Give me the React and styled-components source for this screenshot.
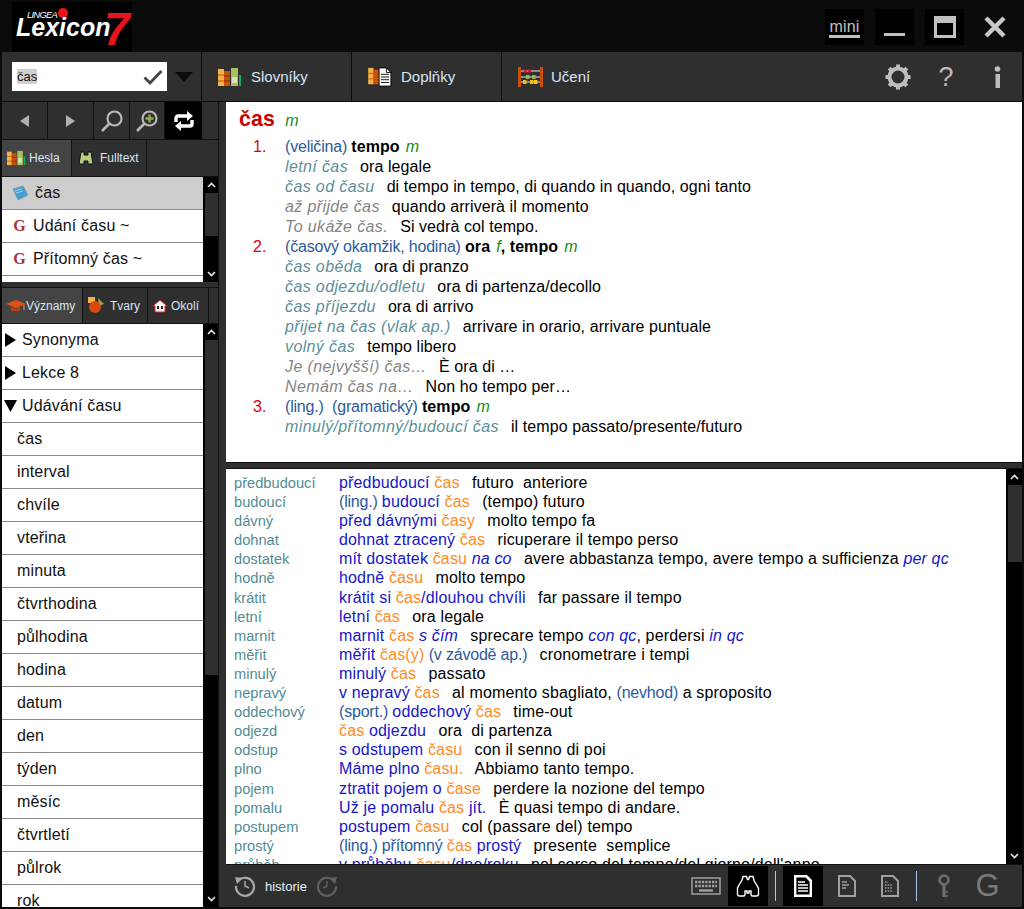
import React from 'react';
import styled, { createGlobalStyle } from 'styled-components';

const Global = createGlobalStyle`
  html, body { margin: 0; padding: 0; background: #0b0b0b; }
  * { box-sizing: border-box; }
`;

const GLetter = styled.span`
  color: #7a7a7a; font-size: 31px; line-height: 30px;
`;
const Window = styled.div`
  width: 1024px; height: 909px; overflow: hidden; background: #0b0b0b;
  padding: 0 2px 2px; display: flex; flex-direction: column;
  font-family: "Liberation Sans", Arial, sans-serif;
`;
const TitleBar = styled.header`
  height: 52px; display: flex; align-items: flex-start; justify-content: space-between;
  padding-left: 10px; padding-right: 8px; flex: none;
`;
const Logo = styled.div`
  position: relative; width: 120px; height: 50px; margin-top: 2px; background: #000; overflow: hidden;
`;
const LogoBrand = styled.span`
  position: absolute; left: 15px; top: 7px; color: #fff; font-size: 9.5px; font-style: italic; letter-spacing: -.8px;
`;
const LogoDot = styled.span`
  position: absolute; left: 46px; top: 6px; width: 10px; height: 10px; border-radius: 50%; background: #e8141c;
`;
const LogoName = styled.span`
  position: absolute; left: 4px; top: 11px; color: #fff; font-size: 25px; font-weight: 700; font-style: italic;
`;
const LogoSeven = styled.span`
  position: absolute; left: 92px; top: 4px; color: #e8141c; font-size: 46px; font-weight: 700; font-style: italic; line-height: 46px;
`;
const WindowButtons = styled.div`
  display: flex; gap: 11px; padding-top: 9px;
`;
const WinButton = styled.div`
  width: 39px; height: 36px; background: ${p => p.$plain ? 'transparent' : '#000'};
  display: flex; align-items: center; justify-content: center; flex-direction: column;
`;
const MiniLabel = styled.span`
  color: #c0c0c0; font-size: 16px; line-height: 15px; border-bottom: 3px solid #c0c0c0; padding: 0 0 1px; margin-top: 2px; letter-spacing: .2px;
`;

const Toolbar = styled.nav`
  height: 50px; flex: none; background: #2f2f2f; display: flex; align-items: stretch; border-bottom: 1px solid #0b0b0b;
`;
const SearchArea = styled.div`
  width: 200px; flex: none; display: flex; align-items: center; padding-left: 10px; border-right: 1px solid #0b0b0b;
`;
const SearchBox = styled.div`
  width: 155px; height: 29px; background: #fff; display: flex; align-items: center; justify-content: space-between; padding: 0 4px 0 5px;
`;
const SearchText = styled.span`
  background: #d0d0d0; color: #111; font-size: 13px; line-height: 15px;
`;
const Caret = styled.div`
  width: 0; height: 0; margin-left: 8px; border-left: 9px solid transparent; border-right: 9px solid transparent; border-top: 10px solid #0b0b0b;
`;
const ToolTab = styled.div`
  width: 150px; flex: none; display: flex; align-items: center; gap: ${p => p.$gap ?? 9}px; padding-left: 16px; color: #d8e6f5; font-size: 15px;
  border-right: ${p => p.$last ? 'none' : '1px solid #0b0b0b'};
`;
const ToolSpacer = styled.div`
  flex: 1; display: flex; align-items: center; justify-content: flex-end;
`;
const ToolIcon = styled.div`
  width: ${p => p.$w}px; display: flex; justify-content: center; color: #bdbdbd; font-size: 27px; line-height: 26px;
`;

const Main = styled.main`
  flex: 1; min-height: 0; display: flex; background: #2f2f2f;
`;
const LeftColumn = styled.aside`
  width: 217px; flex: none; display: flex; flex-direction: column; border-right: 1px solid #111; overflow: hidden;
`;
const NavRow = styled.div`
  height: 38px; flex: none; display: flex; border-bottom: 1px solid #111;
`;
const NavButton = styled.div`
  width: ${p => p.$w}px; flex: none; display: flex; align-items: center; justify-content: center;
  border-right: ${p => p.$active ? 'none' : '1px solid #111'}; background: ${p => p.$active ? '#000' : 'transparent'};
`;
const Triangle = styled.div`
  width: 0; height: 0; border-top: 6px solid transparent; border-bottom: 6px solid transparent;
  ${p => p.$left ? 'border-right: 9px solid #b0b0b0;' : 'border-left: 9px solid #b0b0b0;'}
`;
const TabRow = styled.div`
  height: ${p => p.$h}px; flex: none; display: flex; border-bottom: 1px solid #111;
`;
const Tab = styled.div`
  width: ${p => p.$w}px; flex: none; display: flex; align-items: center; gap: ${p => p.$gap ?? 4}px; padding-left: ${p => p.$pad ?? 5}px;
  background: ${p => p.$active ? '#444' : 'transparent'}; border-right: 1px solid #111; color: #d8e6f5; font-size: 12px; white-space: nowrap;
`;
const ListArea = styled.div`
  display: flex; flex: ${p => p.$grow ? 1 : 'none'}; height: ${p => p.$h ? p.$h + 'px' : 'auto'}; min-height: 0; overflow: hidden;
`;
const ListBody = styled.div`
  width: 201px; flex: none; background: #fff; overflow: hidden;
`;
const Row = styled.div`
  height: 33px; display: flex; align-items: center; gap: ${p => p.$gap ?? 0}px; padding-left: ${p => p.$pad}px; color: #111; font-size: 16px; letter-spacing: .15px;
  border-bottom: 1px solid #8a8a8a; background: ${p => p.$sel ? '#cdcdcd' : '#fff'};
`;
const GMark = styled.span`
  width: 13px; text-align: center; font-family: "Liberation Serif", serif; font-weight: 700; color: #a8303a; font-size: 16px;
`;
const Spacer6 = styled.div`
  height: 6px; flex: none; border-bottom: 1px solid #111;
`;
const Scrollbar = styled.div`
  flex: ${p => p.$fill ? 1 : 'none'}; width: ${p => p.$fill ? 'auto' : '16px'}; background: #000; display: flex; flex-direction: column; align-items: stretch;
`;
const ScrollArrow = styled.div`
  height: 16px; flex: none; display: flex; align-items: center; justify-content: center;
`;
const ScrollTrack = styled.div`
  flex: 1; min-height: 0; padding-left: 2px;
`;
const ScrollThumb = styled.div`
  height: ${p => p.$h}px; background: #2f2f2f;
`;
const Splitter = styled.div`
  width: 7px; flex: none;
`;
const RightColumn = styled.section`
  flex: 1; min-width: 0; display: flex; flex-direction: column;
`;
const EntryPanel = styled.article`
  height: 360px; flex: none; background: #fff; padding: 6px 0 0 13px; overflow: hidden; font-size: 16px; letter-spacing: .08px; color: #000;
`;
const Headline = styled.div`
  height: 23px; display: flex; align-items: baseline; gap: 9px; margin-bottom: 6px;
`;
const HeadWord = styled.span`
  color: #cc0000; font-weight: 700; font-size: 21.33px; line-height: 23px;
`;
const EntryLine = styled.div`
  height: 20px; line-height: 20px; display: flex; white-space: pre;
`;
const Num = styled.span`
  width: 46px; flex: none; padding-left: 14px; color: #d80010;
`;
const Lines = styled.div`
  flex: 1; white-space: pre;
`;
const Gender = styled.i`color: #1a8a1a; font-weight: 400; margin-left: 1.5px;`;
const Note = styled.span`color: #2d5a9c; letter-spacing: -.2px;`;
const Teal = styled.i`color: #5c8f99; letter-spacing: .38px;`;
const Grey = styled.i`color: #858585; letter-spacing: .38px;`;
const Tr = styled.span`margin-left: 3px;`;
const PanelGap = styled.div`
  height: 7px; flex: none; border-top: 1px solid #111; border-bottom: 1px solid #111;
`;
const ResultsArea = styled.div`
  height: 396px; flex: none; display: flex; border-bottom: 1px solid #111;
`;
const Results = styled.div`
  width: 780px; flex: none; background: #fff; padding: 4px 0 0 8px; overflow: hidden;
`;
const ResultRow = styled.div`
  height: 19.1px; line-height: 19.1px; display: flex; align-items: baseline; font-size: 16px; letter-spacing: .16px; color: #000; white-space: pre;
`;
const ResultKey = styled.span`
  width: 105px; flex: none; font-size: 14.67px; letter-spacing: 0; color: #528c93;
`;
const B = styled.span`color: #1616c8;`;
const O = styled.span`color: #ff8a1c;`;
const BI = styled.i`color: #1616c8;`;
const BottomBar = styled.footer`
  flex: 1; display: flex; align-items: stretch; justify-content: space-between; padding: 0 12px 0 8px;
`;
const BarGroup = styled.div`
  display: flex; align-items: center;
`;
const HistoryLabel = styled.span`
  color: #e4effa; font-size: 13px; margin: 0 9px;
`;
const BarButton = styled.div`
  width: ${p => p.$w}px; height: 40px; display: flex; align-items: center; justify-content: center; background: ${p => p.$active ? '#000' : 'transparent'};
`;
const BarSep = styled.div`
  width: 1px; height: 30px; background: #a8c4e4; margin: 0 7px;
`;

const Books = ({ w = 24, h = 20 }) => (
  <svg width={w} height={h} viewBox="0 0 24 20">
    <rect x="0" y="2" width="6" height="17" fill="#f8b24a" />
    <path d="M0 8h6M0 14h6" stroke="#b85a10" />
    <rect x="6" y="4" width="6" height="15" fill="#c8500a" />
    <path d="M6 9h6M6 14h6" stroke="#7c3000" />
    <rect x="13" y="1" width="7" height="18" fill="#a8c060" />
    <rect x="14" y="10" width="5" height="6" fill="#d8e4b0" />
    <rect x="21" y="8" width="2" height="11" fill="#14b060" />
  </svg>
);
const BooksDoc = () => (
  <svg width="24" height="20" viewBox="0 0 26 22">
    <rect x="0" y="1" width="6" height="18" fill="#f8b24a" />
    <path d="M0 7h6M0 13h6" stroke="#b85a10" />
    <rect x="6" y="3" width="6" height="16" fill="#c8500a" />
    <path d="M12 1h8l5 5v15H12z" fill="#fff" stroke="#000" />
    <path d="M14 8h9M14 11h9M14 14h9M14 17h9" stroke="#000" />
    <path d="M20 1v5h5" fill="none" stroke="#000" />
  </svg>
);
const Abacus = () => (
  <svg width="26" height="20" viewBox="0 0 26 20">
    <rect x="0" y="0" width="3" height="20" fill="#c8500a" />
    <rect x="22" y="0" width="3" height="20" fill="#c8500a" />
    <path d="M3 4h19M3 10h19M3 15h19" stroke="#e8e8e8" />
    <rect x="6" y="2.5" width="3" height="3" fill="#d81830" /><rect x="10" y="2.5" width="3" height="3" fill="#d81830" />
    <rect x="8" y="8" width="3.5" height="4" fill="#9cb850" /><rect x="14" y="8" width="3.5" height="4" fill="#9cb850" />
    <rect x="5" y="13" width="3.5" height="4" fill="#f0c020" /><rect x="12" y="13" width="3.5" height="4" fill="#f0c020" /><rect x="16" y="13" width="3.5" height="4" fill="#f0c020" />
  </svg>
);
const Check = () => (
  <svg width="20" height="16" viewBox="0 0 20 16"><path d="M1.5 8.5l5.5 5.5L18.5 2" fill="none" stroke="#444" strokeWidth="2.8" /></svg>
);
const Gear = () => (
  <svg width="26" height="26" viewBox="0 0 26 26">
    <circle cx="13" cy="13" r="8.5" fill="none" stroke="#bdbdbd" strokeWidth="4" />
    {[0, 45, 90, 135, 180, 225, 270, 315].map(a => <rect key={a} x="11" y="0.5" width="4" height="4" fill="#bdbdbd" transform={`rotate(${a} 13 13)`} />)}
  </svg>
);
const Glass = ({ plus }) => (
  <svg width="24" height="24" viewBox="0 0 24 24">
    <circle cx="14.5" cy="9.5" r="7" fill="none" stroke="#b8b8b8" strokeWidth="2.2" />
    <path d="M9.5 14.5L2 22" stroke="#b8b8b8" strokeWidth="2.6" />
    {plus && <path d="M14.5 5.5v8M10.5 9.5h8" stroke="#8fae50" strokeWidth="2.4" />}
  </svg>
);
const Swap = () => (
  <svg width="20" height="20" viewBox="0 0 20 20">
    <path d="M2 11V7a2 2 0 0 1 2-2h10" fill="none" stroke="#fff" strokeWidth="3.4" />
    <path d="M13 0l6 5-6 5z" fill="#fff" />
    <path d="M18 9v4a2 2 0 0 1-2 2H6" fill="none" stroke="#fff" strokeWidth="3.4" />
    <path d="M7 10l-6 5 6 5z" fill="#fff" />
  </svg>
);
const Binoculars = () => (
  <svg width="16" height="16" viewBox="0 0 16 16">
    <path d="M3 2h3v3h4V2h3l2 12H10v-3H6v3H1z" fill="#b8cc80" stroke="#111" />
  </svg>
);
const BinocularsOutline = () => (
  <svg width="24" height="23" viewBox="0 0 24 23">
    <path d="M7 1.5h3.5l1 3h1l1-3H17l1 4 3 5 1.5 3v5.5q0 2-2 2H16l-1-1v-4h-2v2h-2v-2H9v4l-1 1H3.500q-2 0-2-2V13l1.500-3 3-5z" fill="none" stroke="#fff" strokeWidth="1.4" />
  </svg>
);
const Notebook = () => (
  <svg width="17" height="17" viewBox="0 0 17 17">
    <path d="M1 4l10-3 5 9-10 5z" fill="#3f9ed8" stroke="#8ba0a8" />
    <path d="M3 6l7-2M4 8l7-2" stroke="#a8d4f0" />
  </svg>
);
const Cap = () => (
  <svg width="20" height="14" viewBox="0 0 20 14">
    <path d="M0 5l10-4 10 4-10 4z" fill="#e0501a" />
    <path d="M5 8v4h9V8l-4 2z" fill="#c04010" />
    <path d="M18 6v5" stroke="#f0a060" />
  </svg>
);
const Shapes = () => (
  <svg width="17" height="17" viewBox="0 0 17 17">
    <rect x="0" y="0" width="7" height="6" fill="#f8b24a" />
    <path d="M10 1l6 6-5 2z" fill="#8fae50" />
    <circle cx="7" cy="10" r="6" fill="#d84a10" />
  </svg>
);
const House = () => (
  <svg width="14" height="14" viewBox="0 0 14 14">
    <path d="M7 1L0 7h2v6h10V7h2z" fill="#fff" stroke="#d81818" />
    <rect x="4" y="7" width="2" height="3" fill="#222" /><rect x="8" y="7" width="2" height="3" fill="#222" />
  </svg>
);
const Chevron = ({ up }) => (
  <svg width="9" height="6" viewBox="0 0 9 6"><path d={up ? 'M1 5l3.500-3.500L8 5' : 'M1 1l3.500 3.500L8 1'} fill="none" stroke="#e8e8e8" strokeWidth="1.6" /></svg>
);
const History = ({ back, color }) => (
  <svg width="22" height="22" viewBox="0 0 22 22" style={back ? undefined : { transform: 'scaleX(-1)' }}>
    <path d="M4.500 5.500A9 9 0 1 1 2 11" fill="none" stroke={color} strokeWidth="2.2" />
    <path d="M1 2l8 1-6 6z" fill={color} />
    <path d="M11 6v5l4 2" fill="none" stroke={color} strokeWidth="1.5" />
  </svg>
);
const Keyboard = () => (
  <svg width="30" height="18" viewBox="0 0 30 18">
    <rect x="1" y="1" width="28" height="16" fill="none" stroke="#a0a0a0" strokeWidth="1.500" />
    <path d="M4 5h22M4 9h22" stroke="#a0a0a0" strokeWidth="2.4" strokeDasharray="2.4 1" />
    <path d="M8 13.500h14" stroke="#a0a0a0" strokeWidth="2.4" />
  </svg>
);
const Doc = ({ color, weight = 1.6, dots }) => (
  <svg width="18" height="22" viewBox="0 0 18 22">
    <path d="M1 1h11l5 5v15H1z" fill="none" stroke={color} strokeWidth={weight + .4} />
    {dots
      ? <path d="M4 7h3M4 10h8M4 13h8M4 16h8" stroke={color} strokeWidth="1.500" strokeDasharray="1.500 1.200" />
      : weight > 2
        ? <path d="M4 7h7M4 10h10M4 13h10M4 16h10" stroke={color} strokeWidth="1.500" />
        : <path d="M4 7h5M4 10h7M4 13h4" stroke={color} strokeWidth="1.500" />}
  </svg>
);
const KeyIcon = () => (
  <svg width="14" height="24" viewBox="0 0 14 24">
    <circle cx="6" cy="6" r="4.500" fill="none" stroke="#6e6e6e" strokeWidth="2.6" />
    <path d="M6 10v13" stroke="#6e6e6e" strokeWidth="3" />
    <path d="M7 18h3M7 22h3" stroke="#6e6e6e" strokeWidth="1.600" />
  </svg>
);
const RightArrow = () => <svg width="11" height="14" viewBox="0 0 11 14"><path d="M0 0l11 7-11 7z" /></svg>;
const DownArrow = () => <svg width="13" height="12" viewBox="0 0 13 12"><path d="M0 0h13l-6.500 12z" /></svg>;

const words = ['čas', 'interval', 'chvíle', 'vteřina', 'minuta', 'čtvrthodina', 'půlhodina', 'hodina', 'datum', 'den', 'týden', 'měsíc', 'čtvrtletí', 'půlrok', 'rok'];

const ScrollBarPart = ({ thumb, fill }) => (
  <Scrollbar $fill={fill}>
    <ScrollArrow><Chevron up /></ScrollArrow>
    <ScrollTrack><ScrollThumb $h={thumb} /></ScrollTrack>
    <ScrollArrow><Chevron /></ScrollArrow>
  </Scrollbar>
);

const results = [
  ['předbudoucí', <><B>předbudoucí </B><O>čas</O><Tr>{'  futuro  anteriore'}</Tr></>],
  ['budoucí', <><Note>(ling.) </Note><B>budoucí </B><O>čas</O><Tr>{'  (tempo) futuro'}</Tr></>],
  ['dávný', <><B>před dávnými </B><O>časy</O><Tr>{'  molto tempo fa'}</Tr></>],
  ['dohnat', <><B>dohnat ztracený </B><O>čas</O><Tr>{'  ricuperare il tempo perso'}</Tr></>],
  ['dostatek', <><B>mít dostatek </B><O>času</O> <BI>na co</BI><Tr>{'  avere abbastanza tempo, avere tempo a sufficienza '}</Tr><BI>per qc</BI></>],
  ['hodně', <><B>hodně </B><O>času</O><Tr>{'  molto tempo'}</Tr></>],
  ['krátit', <><B>krátit si </B><O>čas</O><B>/dlouhou chvíli</B><Tr>{'  far passare il tempo'}</Tr></>],
  ['letní', <><B>letní </B><O>čas</O><Tr>{'  ora legale'}</Tr></>],
  ['marnit', <><B>marnit </B><O>čas</O> <BI>s čím</BI><Tr>{'  sprecare tempo '}</Tr><BI>con qc</BI>{', perdersi '}<BI>in qc</BI></>],
  ['měřit', <><B>měřit </B><O>čas(y)</O><Note> (v závodě ap.)</Note><Tr>{'  cronometrare i tempi'}</Tr></>],
  ['minulý', <><B>minulý </B><O>čas</O><Tr>{'  passato'}</Tr></>],
  ['nepravý', <><B>v nepravý </B><O>čas</O><Tr>{'  al momento sbagliato, '}</Tr><Note>(nevhod)</Note>{' a sproposito'}</>],
  ['oddechový', <><Note>(sport.) </Note><B>oddechový </B><O>čas</O><Tr>{'  time-out'}</Tr></>],
  ['odjezd', <><O>čas</O><B> odjezdu</B><Tr>{'  ora  di partenza'}</Tr></>],
  ['odstup', <><B>s odstupem </B><O>času</O><Tr>{'  con il senno di poi'}</Tr></>],
  ['plno', <><B>Máme plno </B><O>času.</O><Tr>{'  Abbiamo tanto tempo.'}</Tr></>],
  ['pojem', <><B>ztratit pojem o </B><O>čase</O><Tr>{'  perdere la nozione del tempo'}</Tr></>],
  ['pomalu', <><B>Už je pomalu </B><O>čas</O><B> jít.</B><Tr>{'  È quasi tempo di andare.'}</Tr></>],
  ['postupem', <><B>postupem </B><O>času</O><Tr>{'  col (passare del) tempo'}</Tr></>],
  ['prostý', <><Note>(ling.) přítomný </Note><O>čas</O><B> prostý</B><Tr>{'  presente  semplice'}</Tr></>],
  ['průběh', <><B>v průběhu </B><O>času</O><B>/dne/roku</B><Tr>{'  nel corso del tempo/del giorno/dell\'anno'}</Tr></>],
];

const entry = [
  ['1.', <><Note>(veličina) </Note><b>tempo</b> <Gender>m</Gender></>],
  ['', <><Teal>letní čas</Teal><Tr>{'  ora legale'}</Tr></>],
  ['', <><Teal>čas od času</Teal><Tr>{'  di tempo in tempo, di quando in quando, ogni tanto'}</Tr></>],
  ['', <><Grey>až přijde čas</Grey><Tr>{'  quando arriverà il momento'}</Tr></>],
  ['', <><Grey>To ukáže čas.</Grey><Tr>{'  Si vedrà col tempo.'}</Tr></>],
  ['2.', <><Note>(časový okamžik, hodina) </Note><b>ora</b> <Gender>f</Gender><b>, tempo</b> <Gender>m</Gender></>],
  ['', <><Teal>čas oběda</Teal><Tr>{'  ora di pranzo'}</Tr></>],
  ['', <><Teal>čas odjezdu/odletu</Teal><Tr>{'  ora di partenza/decollo'}</Tr></>],
  ['', <><Teal>čas příjezdu</Teal><Tr>{'  ora di arrivo'}</Tr></>],
  ['', <><Teal>přijet na čas (vlak ap.)</Teal><Tr>{'  arrivare in orario, arrivare puntuale'}</Tr></>],
  ['', <><Teal>volný čas</Teal><Tr>{'  tempo libero'}</Tr></>],
  ['', <><Grey>Je (nejvyšší) čas…</Grey><Tr>{'  È ora di …'}</Tr></>],
  ['', <><Grey>Nemám čas na…</Grey><Tr>{'  Non ho tempo per…'}</Tr></>],
  ['3.', <><Note>(ling.)  (gramatický) </Note><b>tempo</b> <Gender>m</Gender></>],
  ['', <><Teal>minulý/přítomný/budoucí čas</Teal><Tr>{'  il tempo passato/presente/futuro'}</Tr></>],
];

export default function App() {
  return (
    <Window>
      <Global />
      <TitleBar>
        <Logo>
          <LogoBrand>LINGEA</LogoBrand>
          <LogoDot />
          <LogoName>Lexicon</LogoName>
          <LogoSeven>7</LogoSeven>
        </Logo>
        <WindowButtons>
          <WinButton><MiniLabel>mini</MiniLabel></WinButton>
          <WinButton><svg width="22" height="20" viewBox="0 0 22 20"><rect x="0" y="16" width="21" height="3" fill="#c0c0c0" /></svg></WinButton>
          <WinButton><svg width="22" height="22" viewBox="0 0 22 22"><rect x="1.500" y="1.500" width="19" height="19" fill="none" stroke="#c0c0c0" strokeWidth="3" /><rect x="1" y="1" width="20" height="6" fill="#c0c0c0" /></svg></WinButton>
          <WinButton $plain><svg width="22" height="22" viewBox="0 0 22 22"><path d="M2 2l18 18M20 2L2 20" stroke="#c8c8c8" strokeWidth="4.500" /></svg></WinButton>
        </WindowButtons>
      </TitleBar>

      <Toolbar>
        <SearchArea>
          <SearchBox><SearchText>čas</SearchText><Check /></SearchBox>
          <Caret />
        </SearchArea>
        <ToolTab><Books />Slovníky</ToolTab>
        <ToolTab><BooksDoc />Doplňky</ToolTab>
        <ToolTab $last $gap={7}><Abacus />Učení</ToolTab>
        <ToolSpacer>
          <ToolIcon $w={44}><Gear /></ToolIcon>
          <ToolIcon $w={52}>?</ToolIcon>
          <ToolIcon $w={50}>
            <svg width="7" height="22" viewBox="0 0 7 22"><circle cx="3.500" cy="3" r="2.800" fill="#bdbdbd" /><rect x="1.500" y="8" width="4.500" height="14" fill="#bdbdbd" /></svg>
          </ToolIcon>
        </ToolSpacer>
      </Toolbar>

      <Main>
        <LeftColumn>
          <NavRow>
            <NavButton $w={46}><Triangle $left /></NavButton>
            <NavButton $w={46}><Triangle /></NavButton>
            <NavButton $w={36}><Glass /></NavButton>
            <NavButton $w={35}><Glass plus /></NavButton>
            <NavButton $w={37} $active><Swap /></NavButton>
          </NavRow>
          <TabRow $h={37}>
            <Tab $w={70} $active $gap={3} $pad={5}><Books w={19} h={16} />Hesla</Tab>
            <Tab $w={75} $pad={6} $gap={6}><Binoculars />Fulltext</Tab>
          </TabRow>
          <ListArea $h={105}>
            <ListBody>
              <Row $sel $pad={10} $gap={6}><Notebook />čas</Row>
              <Row $pad={11} $gap={7}><GMark>G</GMark>Udání času ~</Row>
              <Row $pad={11} $gap={7}><GMark>G</GMark>Přítomný čas ~</Row>
            </ListBody>
            <ScrollBarPart thumb={43} />
          </ListArea>
          <Spacer6 />
          <TabRow $h={36}>
            <Tab $w={81} $active $gap={0} $pad={4}><Cap /><span>Významy</span></Tab>
            <Tab $w={65} $gap={5} $pad={5}><Shapes />Tvary</Tab>
            <Tab $w={61} $gap={4} $pad={5}><House />Okolí</Tab>
          </TabRow>
          <ListArea $grow>
            <ListBody>
              <Row $pad={3} $gap={6}><RightArrow />Synonyma</Row>
              <Row $pad={3} $gap={6}><RightArrow />Lekce 8</Row>
              <Row $pad={2} $gap={5}><DownArrow />Udávání času</Row>
              {words.map(w => <Row key={w} $pad={15}>{w}</Row>)}
            </ListBody>
            <ScrollBarPart thumb={335} />
          </ListArea>
        </LeftColumn>
        <Splitter />
        <RightColumn>
          <EntryPanel>
            <Headline><HeadWord>čas</HeadWord><Gender>m</Gender></Headline>
            {entry.map((e, i) => <EntryLine key={i}><Num>{e[0]}</Num><Lines>{e[1]}</Lines></EntryLine>)}
          </EntryPanel>
          <PanelGap />
          <ResultsArea>
            <Results>
              {results.map(r => <ResultRow key={r[0]}><ResultKey>{r[0]}</ResultKey><span>{r[1]}</span></ResultRow>)}
            </Results>
            <ScrollBarPart fill thumb={77} />
          </ResultsArea>
          <BottomBar>
            <BarGroup>
              <History back color="#a8a8a8" />
              <HistoryLabel>historie</HistoryLabel>
              <History color="#606060" />
            </BarGroup>
            <BarGroup>
              <BarButton $w={44}><Keyboard /></BarButton>
              <BarButton $w={40} $active><BinocularsOutline /></BarButton>
              <BarSep />
              <BarButton $w={40} $active><Doc color="#fff" weight={2.4} /></BarButton>
              <BarButton $w={48}><Doc color="#a0a0a0" /></BarButton>
              <BarButton $w={38}><Doc color="#a0a0a0" dots /></BarButton>
              <BarSep />
              <BarButton $w={41}><KeyIcon /></BarButton>
              <BarButton $w={45}><GLetter>G</GLetter></BarButton>
            </BarGroup>
          </BottomBar>
        </RightColumn>
      </Main>
    </Window>
  );
}
